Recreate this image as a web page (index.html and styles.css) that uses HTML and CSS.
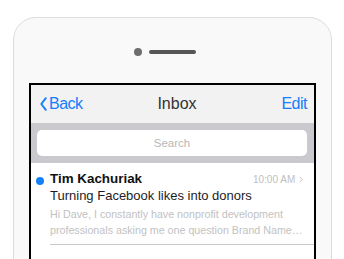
FILE: index.html
```html
<!DOCTYPE html>
<html lang="en">
<head>
<meta charset="utf-8">
<title>Inbox</title>
<link rel="stylesheet" href="styles.css">
</head>
<body>
<div class="phone">
  <div class="sensor">
    <span class="camera"></span>
    <span class="speaker"></span>
    <span class="camera ghost"></span>
  </div>
  <div class="screen">
    <div class="nav">
      <a class="back">
        <svg class="chev" width="7" height="14" viewBox="0 0 7 14"><path d="M5.8 1.2 L1.3 7 L5.8 12.8" fill="none" stroke="#147efb" stroke-width="1.9" stroke-linecap="round" stroke-linejoin="round"/></svg>
        <span>Back</span>
      </a>
      <span class="title">Inbox</span>
      <a class="edit">Edit</a>
    </div>
    <div class="searchbar">
      <div class="field">Search</div>
    </div>
    <div class="mail">
      <span class="unread"></span>
      <div class="content">
        <div class="head">
          <span class="from">Tim Kachuriak</span>
          <span class="time">10:00 AM <svg class="tchev" width="4" height="7" viewBox="0 0 4 7"><path d="M0.7 0.8 L3.2 3.5 L0.7 6.2" fill="none" stroke="#c4c4c4" stroke-width="1"/></svg></span>
        </div>
        <div class="subject">Turning Facebook likes into donors</div>
        <div class="preview">Hi Dave, I constantly have nonprofit development professionals asking me one question Brand Name…</div>
      </div>
    </div>
  </div>
</div>
</body>
</html>
```

FILE: styles.css
```css
html, body {
  margin: 0;
  padding: 0;
  background: #ffffff;
  overflow: hidden;
}
body {
  width: 344px;
  height: 259px;
  font-family: "Liberation Sans", Arial, sans-serif;
}
.phone {
  box-sizing: border-box;
  margin: 17px 0 0 13px;
  width: 319px;
  height: 420px;
  border: 1px solid #dcdcdc;
  border-radius: 23px;
  background: #f9f9f9;
  padding: 0 15px;
}
.sensor {
  display: flex;
  justify-content: center;
  align-items: center;
  gap: 7px;
  height: 8px;
  padding-top: 30px;
  margin-bottom: 27px;
}
.camera {
  width: 8px;
  height: 8px;
  border-radius: 50%;
  background: #6d6d6d;
}
.camera.ghost {
  visibility: hidden;
}
.speaker {
  width: 47px;
  height: 4px;
  border-radius: 2px;
  background: #565656;
}
.screen {
  box-sizing: border-box;
  width: 287px;
  height: 320px;
  border: 2px solid #000;
  background: #ffffff;
}
.nav {
  height: 38px;
  background: #f2f2f2;
  display: grid;
  grid-template-columns: 1fr auto 1fr;
  align-items: center;
  padding: 0 7px 0 9px;
  font-size: 16px;
}
.back {
  display: flex;
  align-items: center;
  gap: 2px;
  color: #147efb;
  letter-spacing: -0.5px;
}
.chev {
  display: block;
}
.title {
  color: #333333;
  padding-left: 7px;
}
.edit {
  justify-self: end;
  color: #147efb;
  letter-spacing: -0.5px;
}
.searchbar {
  background: #c9c9ce;
  padding: 7px 7px 7px 6px;
}
.field {
  height: 26px;
  border-radius: 5px;
  background: #ffffff;
  display: flex;
  align-items: center;
  justify-content: center;
  font-size: 11.5px;
  color: #b8b8b8;
}
.mail {
  display: flex;
  align-items: flex-start;
  gap: 6px;
  padding: 8px 0 0 5px;
}
.unread {
  flex: none;
  width: 8px;
  height: 8px;
  margin-top: 6px;
  border-radius: 50%;
  background: #1481fb;
}
.content {
  flex: 1;
  padding: 0 8px 6px 0;
  border-bottom: 1px solid #c8c8c8;
}
.head {
  display: flex;
  justify-content: space-between;
  align-items: baseline;
  line-height: 16px;
}
.from {
  font-size: 13.4px;
  font-weight: bold;
  color: #111111;
}
.time {
  font-size: 10px;
  color: #c0c0c0;
  padding-right: 3px;
}
.tchev {
  margin-left: 1px;
}
.subject {
  font-size: 13px;
  line-height: 16px;
  color: #1d1d26;
}
.preview {
  margin-top: 1.5px;
  font-size: 10.7px;
  line-height: 16px;
  color: #c2c2c2;
}
```
